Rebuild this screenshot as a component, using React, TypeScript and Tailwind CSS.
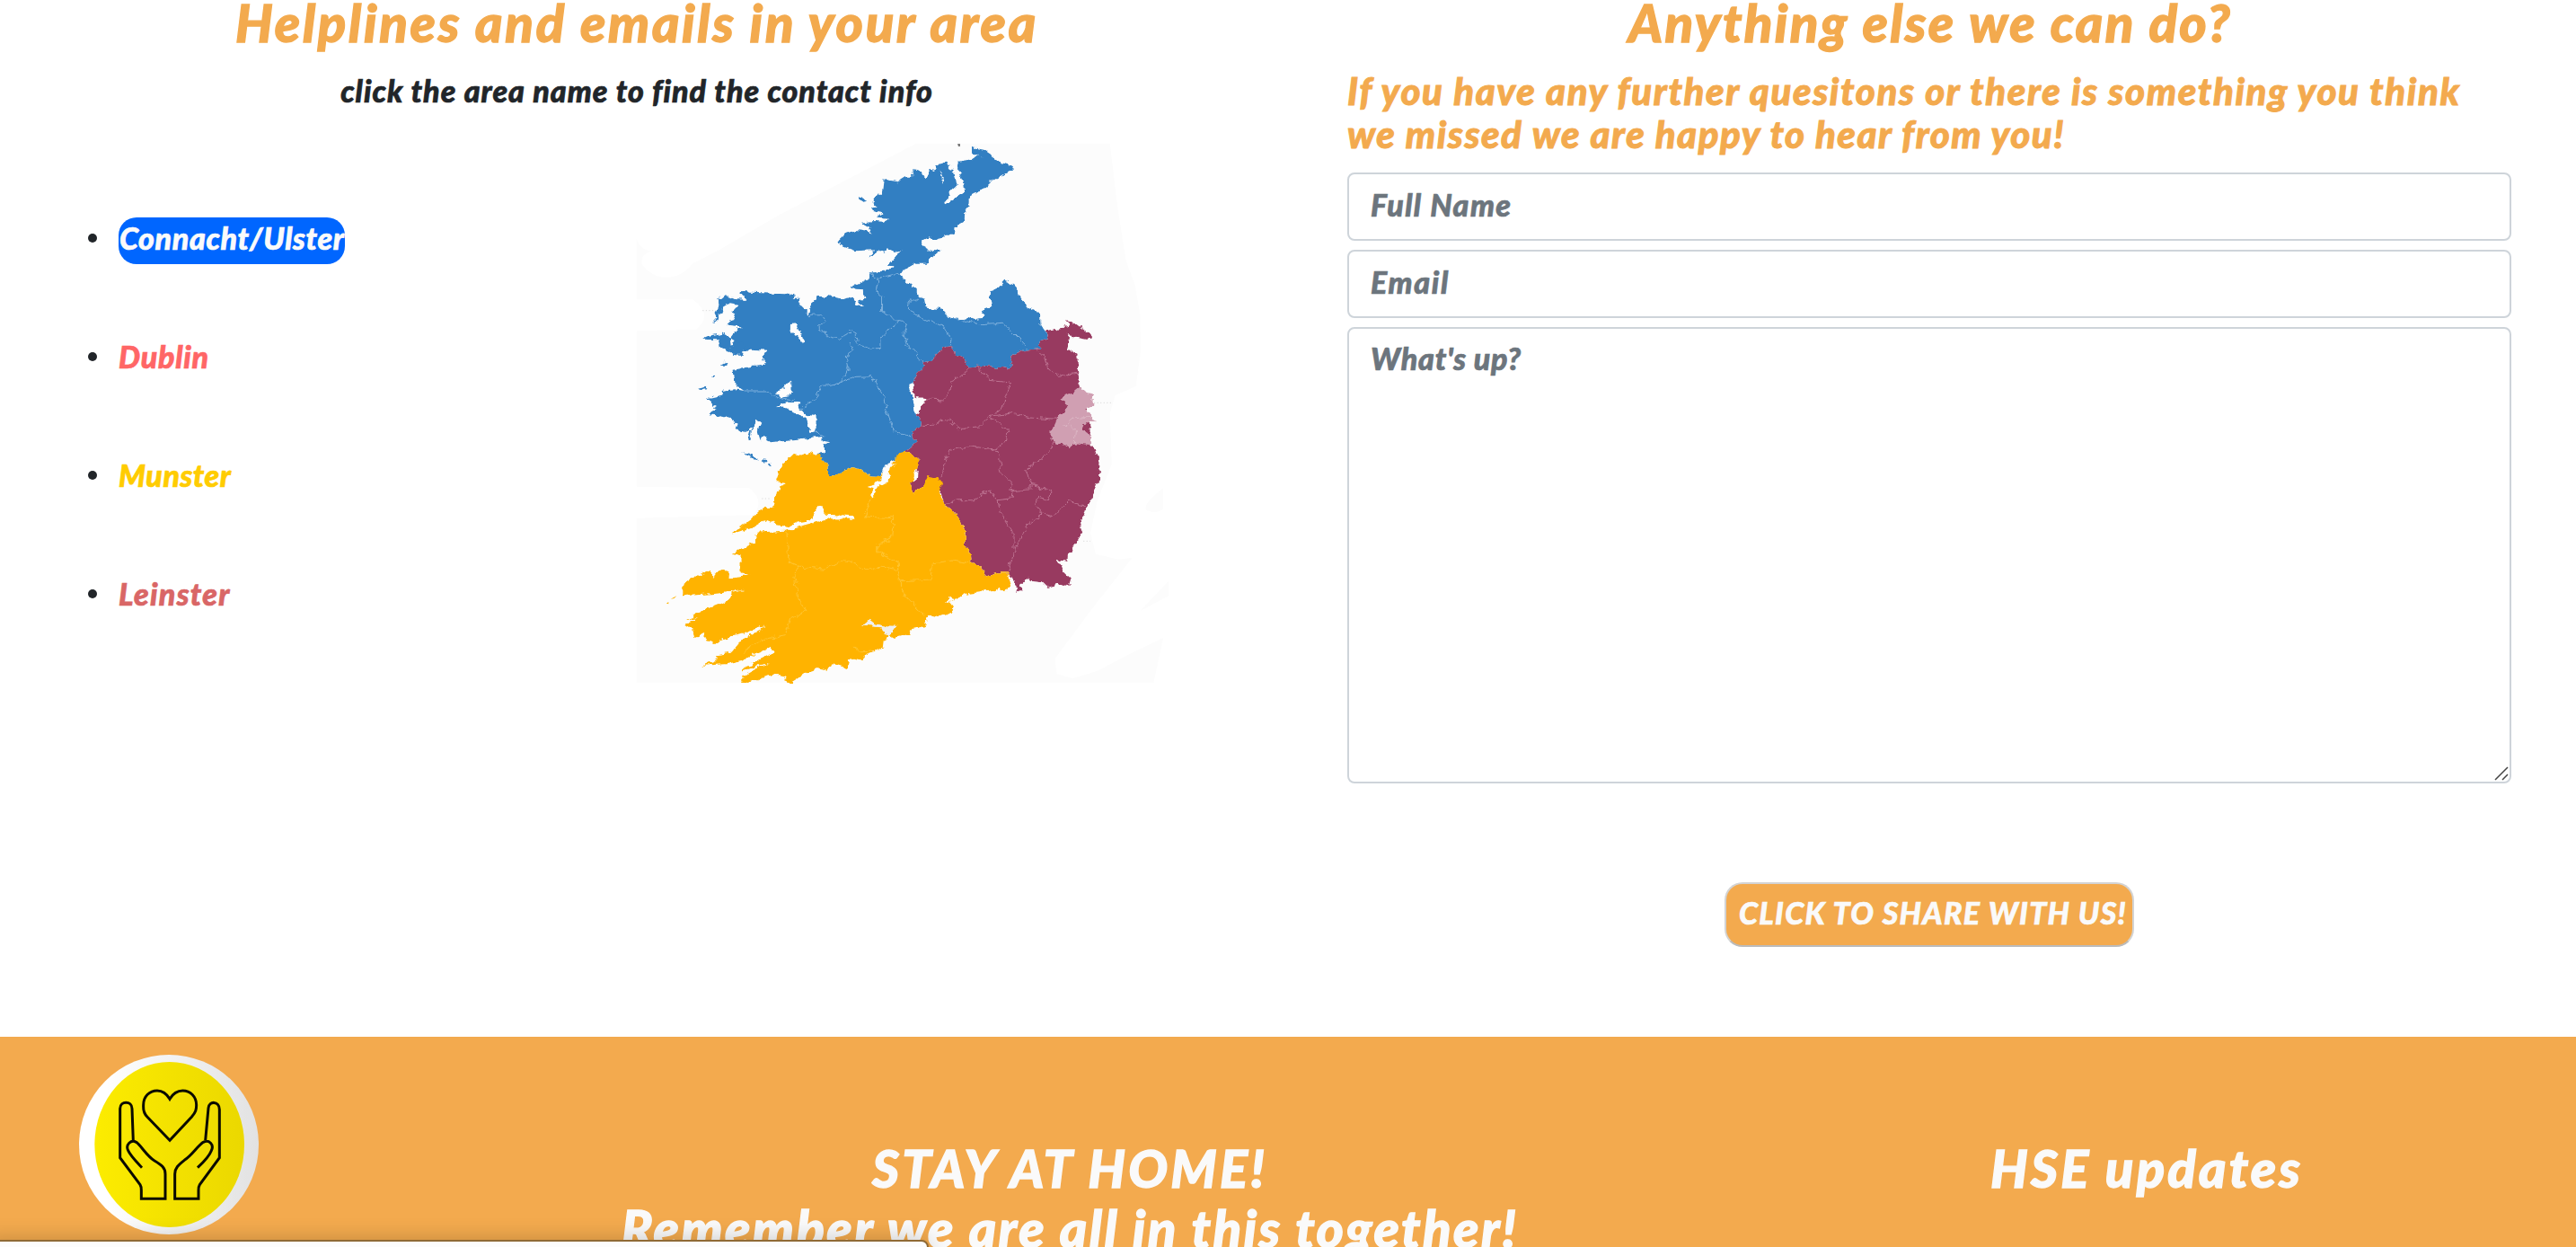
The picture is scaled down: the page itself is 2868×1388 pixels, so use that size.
const BLUE =
  "M965 42L1000 50 1020 66 1025 82 1060 96 1085 106 1080 118 1055 135 1020 155 990 190 965 198 958 210 957 240 947 245 945 290 922 308 920 332 895 332 865 350 845 340 825 352 825 372 845 385 880 390 860 400 840 428 800 428 785 450 760 462 785 495 810 518 815 540 832 545 836 578 880 582 905 612 935 615 955 608 975 618 995 615 1005 578 1025 572 1015 522 1035 515 1058 485 1080 495 1100 520 1105 550 1125 575 1145 588 1158 590 1160 635 1172 655 1183 668 1175 685 1160 690 1158 715 1125 718 1085 735 1078 745 1085 765 1065 780 1015 772 960 778 940 745 918 738 915 715 897 703 870 722 858 755 828 760 832 775 812 800 800 830 800 880 810 925 822 955 820 975 795 992 808 1030 780 1055 755 1085 735 1095 720 1110 708 1140 680 1138 660 1120 630 1110 600 1125 590 1138 565 1138 562 1105 540 1080 530 1065 552 1060 545 1035 565 1027 545 1022 545 1008 470 1020 400 1027 380 1010 368 1022 362 1000 375 965 360 950 350 968 345 1020 338 1018 345 980 325 992 300 982 305 965 290 950 265 942 240 935 225 938 235 925 250 915 235 905 235 892 220 880 265 868 262 855 300 850 325 855 300 835 295 785 340 775 385 770 375 745 388 722 325 718 320 735 295 732 282 722 260 710 255 685 210 683 235 670 262 662 285 675 288 710 300 690 285 680 298 660 315 640 280 635 285 620 300 615 290 590 305 570 280 565 265 575 258 600 243 628 240 605 252 580 250 555 270 535 300 548 330 552 312 525 325 518 345 527 440 532 450 527 467 532 465 545 482 545 475 565 500 580 500 605 515 570 525 540 560 540 600 552 630 545 640 570 660 575 645 555 672 545 655 535 665 520 640 518 625 512 650 495 680 478 680 460 725 458 745 442 733 432 755 405 770 378 745 390 730 382 720 395 705 385 682 410 690 385 640 388 595 368 590 352 610 330 640 318 685 325 680 310 655 293 690 288 715 290 732 278 700 275 715 265 685 258 680 245 705 238 685 215 698 200 715 200 720 150 760 157 780 142 800 138 797 118 820 122 830 140 845 140 840 115 860 120 870 98 895 92 910 120 925 90 965 82 980 70 998 85 970 60Z";
const MAROON =
  "M897 703L915 715 918 738 940 745 960 778 1015 772 1065 780 1085 765 1078 745 1085 735 1125 718 1158 715 1160 690 1175 685 1183 668 1175 655 1235 642 1235 622 1260 632 1300 668 1295 682 1265 675 1228 667 1240 670 1235 715 1263 735 1265 795 1272 840 1290 900 1300 1035 1312 1050 1320 1080 1318 1110 1328 1145 1310 1190 1295 1225 1285 1270 1270 1300 1278 1330 1255 1375 1237 1400 1235 1425 1205 1418 1225 1455 1245 1480 1240 1508 1210 1500 1180 1512 1165 1495 1130 1490 1125 1475 1112 1490 1105 1515 1090 1530 1095 1510 1080 1480 1070 1465 1035 1465 1010 1475 985 1440 963 1425 960 1390 945 1370 945 1310 920 1265 890 1240 880 1200 870 1170 830 1175 805 1198 788 1165 810 1160 818 1085 780 1055 808 1030 795 992 820 975 822 955 810 925 805 870 800 830 812 800 832 775 828 760 858 755 870 722Z";
const DUBLIN =
  "M1270 842L1288 862 1308 870 1305 905 1285 915 1300 930 1300 950 1318 957 1280 967 1277 985 1300 1000 1303 1035 1250 1030 1240 1050 1230 1035 1190 1020 1190 990 1205 950 1235 915 1230 895 1215 880 1250 862Z";
const MUNSTER =
  "M465 1065L500 1072 518 1058 532 1065 540 1080 562 1105 565 1138 590 1138 600 1125 630 1110 660 1120 680 1138 708 1140 755 1085 760 1060 780 1055 818 1085 815 1120 800 1140 805 1165 788 1165 805 1198 830 1175 845 1140 885 1162 875 1195 890 1240 920 1265 945 1310 945 1370 960 1390 963 1425 985 1440 1010 1475 1035 1465 1070 1465 1075 1500 1065 1522 1030 1520 960 1532 930 1545 905 1560 915 1575 910 1595 870 1612 845 1605 835 1640 800 1650 790 1670 750 1682 735 1672 720 1690 718 1710 690 1725 670 1730 658 1755 635 1748 620 1752 612 1780 570 1765 560 1790 530 1782 500 1795 480 1812 455 1830 435 1825 445 1805 420 1800 380 1810 335 1830 318 1825 330 1805 395 1762 318 1793 325 1780 410 1730 400 1712 350 1735 320 1755 270 1768 210 1772 250 1752 245 1738 290 1730 310 1702 345 1670 385 1640 300 1670 240 1698 218 1688 215 1665 185 1680 180 1650 160 1635 195 1615 165 1620 190 1595 280 1555 290 1530 330 1520 250 1532 150 1540 150 1505 185 1475 230 1455 230 1475 265 1450 285 1478 340 1470 315 1465 315 1405 288 1397 355 1365 360 1325 330 1325 290 1330 345 1285 380 1245 405 1245 415 1190 440 1160 415 1155 430 1105Z";

const BLUE_BORDERS =
  "M706 478L698 525 712 540 712 590 760 622 720 665 708 685 708 712 680 714 643 698 640 665 625 658 590 688 545 660 535 640 555 625 540 602 505 605M680 462L706 478 760 462M815 540L792 560 790 588 830 612 860 630 890 645 908 680 906 705M760 622L785 630 775 670 785 712 800 718 828 760M905 612L985 632 1055 628 1080 660 1105 690 1125 715M620 690L632 720 610 740 620 780 605 818 585 832 640 808 680 806 700 840 720 870 725 910 745 990 795 1008M585 832L545 838 520 885 485 918M325 855L388 855 415 875 465 885M525 990L550 1005";
const MAROON_BORDERS =
  "M960 778L940 805 908 825 905 860 890 885 840 882M980 768L1015 820 1075 828 1060 880 1050 920 1015 940 985 975 925 980 905 945 855 970 822 970M1015 940L1065 985 1060 1030 1020 1055M1015 940L1080 930 1130 945 1205 952M1040 1055L960 1040 900 1055 875 1150M1040 1055L1050 1130 1080 1165 1075 1215 1040 1220 1015 1185 975 1220 920 1220 890 1235M1080 1190L1130 1185 1132 1160 1120 1120 1185 1060 1200 1025M1132 1172L1190 1185 1185 1220 1150 1210 1145 1235 1165 1265 1195 1275 1240 1220 1285 1240M1165 1265L1125 1300 1090 1375 1065 1465M1040 1220L1045 1260 1085 1330 1085 1380M1145 715L1170 740 1180 780 1210 805 1265 795";
const MUNSTER_BORDERS =
  "M690 1200L665 1275 745 1280 740 1350 700 1365 700 1390 755 1425 765 1490 855 1485 858 1430 910 1422 963 1430M755 1452L710 1440 675 1458 610 1418 550 1450 480 1440 450 1425 445 1325M480 1440L465 1475 480 1560 500 1588 455 1615 440 1670 380 1685 320 1730M765 1490L765 1520 830 1600M635 1710L650 1725 685 1722";
const WATER =
  "M905 90L930 88 928 120 943 155 946 190 920 207 888 237 900 200 912 182 928 165 920 140ZM876 112L888 150 880 168 882 145ZM455 630L470 628 482 660 498 690 490 700 475 675 455 650ZM458 818L460 870 430 875 412 862 435 850ZM415 905L450 893 480 895 487 925 500 935 525 940 525 995 510 995 500 945 470 930 440 912ZM790 830L800 825 803 875 842 880 822 895 822 930 806 925 800 880 790 850ZM290 1333L345 1312 385 1285 415 1300 450 1308 470 1295 510 1288 530 1240 548 1240 552 1268 635 1273 633 1283 560 1282 480 1312 440 1322 355 1328ZM725 1095L757 1100 735 1115 730 1160 700 1180 685 1212 678 1200 690 1180 670 1172 710 1160 715 1130ZM1040 1510L1050 1522 1025 1522ZM895 1545L915 1552 900 1565Z";
const ISLES =
  "M652 212L660 208 670 222 655 224ZM258 765L272 755 283 762 265 768ZM235 808L245 802 243 810ZM195 848L215 842 222 850 205 852ZM292 698L322 690 326 722 310 734 292 728ZM316 1060L345 1068 370 1085 350 1080ZM373 1085L385 1090 382 1098ZM390 1102L402 1100 400 1108Z";

function IrelandMap() {
  return (
    <svg className="block h-[620px] w-[620px] shrink-0" viewBox="0 0 1568 1860" preserveAspectRatio="none">
      <defs>
        <filter id="coast" x="0" y="0" width="1568" height="1860" filterUnits="userSpaceOnUse" colorInterpolationFilters="sRGB">
          <feTurbulence type="fractalNoise" baseFrequency="0.045" numOctaves="3" seed="4" result="n" />
          <feDisplacementMap in="SourceGraphic" in2="n" scale="22" xChannelSelector="R" yChannelSelector="G" />
        </filter>
      </defs>
      <path
        fill="#fcfcfc"
        d="M808 30H1355L1375 230 1400 420 1425 500 1440 600 1442 720 1428 840 1370 870 1355 930 1360 1100 1320 1220 1300 1330 1315 1400 1380 1418 1418 1412 1300 1590 1200 1750 1205 1800 1250 1815 1320 1790 1400 1740 1505 1680 1478 1830H22V1280L350 1270Q385 1225 340 1180L22 1175V655L190 650Q240 600 180 550L22 550V345Q30 385 65 388 30 400 38 435 70 480 110 476 150 475 180 430L250 388 420 270Z"
      />
      <path fill="#fcfcfc" d="M1505 1180V1250Q1480 1268 1460 1255 1440 1240 1505 1180ZM1520 1490V1540L1440 1590Z" />
      <g filter="url(#coast)" strokeLinejoin="round">
        <path fill="#327fc2" d={BLUE} />
        <path fill="#327fc2" d={ISLES} />
        <path fill="#983a60" d={MAROON} />
        <path fill="#ffb300" d={MUNSTER} />
        <path fill="#d09fb2" d={DUBLIN} />
        <path fill="#fdfdfd" d={WATER} />
        <path fill="#efefef" d="M658 1640L675 1622 710 1638 750 1640 735 1672 720 1668 712 1645Z" />
        <g fill="none" strokeWidth="2.5">
          <path stroke="#86b5df" d={BLUE_BORDERS} />
          <path stroke="#c07896" d={MAROON_BORDERS} />
          <path stroke="#ffc42e" strokeWidth="3" d={MUNSTER_BORDERS} />
          <path stroke="#dcb6c5" d="M1225 970L1250 945 1295 940M1235 965L1258 985 1255 1030" />
        </g>
      </g>
      <path fill="#777" d="M926 30h7v9h-5z" />
      <path stroke="#ccc" strokeWidth="2" strokeDasharray="3 6" d="M1310 895H1360M208 587H245M1280 1357H1300M375 1215H400" />
      <path fill="#ffb300" d="M118 1550L135 1540 128 1548ZM106 1565L112 1560V1567Z" />
    </svg>
  );
}

function Logo() {
  return (
    <svg className="block size-[200px]" viewBox="84 102 600 600">
      <defs>
        <linearGradient id="ring">
          <stop offset="0.15" stopColor="#fff" />
          <stop offset="1" stopColor="#e2e2e2" />
        </linearGradient>
        <linearGradient id="disc">
          <stop offset="0" stopColor="#fcec00" />
          <stop offset="1" stopColor="#ebd800" />
        </linearGradient>
      </defs>
      <circle cx="384" cy="402" r="300" fill="url(#ring)" />
      <ellipse cx="386" cy="402" rx="250" ry="276" fill="url(#disc)" />
      <g fill="none" stroke="#0b0b00" strokeWidth="9">
        <path d="M387 388L312 310C296 293 299 281 299 270C299 240 320 222 345 222C368 222 380 238 387 250C394 238 406 222 430 222C456 222 476 242 476 270C476 285 474 294 460 310Z" />
        <path d="M265 390L261 282C261 255 221 255 221 282V446L288 536Q292 542 292 555V583H372V500C372 480 360 470 336 456C310 440 292 406 275 394C258 384 238 402 248 422C256 440 278 462 294 479" />
        <path d="M506 388L516 280C518 254 553 257 553 285V446L487 536Q483 542 483 555V583H404V500C404 480 416 470 436 454C462 438 480 406 499 394C518 384 536 402 526 422C520 438 498 462 480 479" />
      </g>
    </svg>
  );
}

const AREAS = [
  { name: "Connacht/Ulster", style: "w-[252px] rounded-[20px] bg-[#0066ff] text-[#fafafa] tracking-[0.65px] pl-px" },
  { name: "Dublin", style: "text-[#ff6666] tracking-[0.7px]" },
  { name: "Munster", style: "text-[#ffcc00] tracking-[0.5px]" },
  { name: "Leinster", style: "text-[#d96666] tracking-[1.3px]" },
];

export default function App() {
  return (
    <div className="relative flex h-[1388px] w-[2868px] flex-col overflow-hidden bg-white font-[Lato,sans-serif] font-black text-[#212529] italic [-webkit-text-stroke-width:0.7px]">
      <div className="flex h-[1154px] shrink-0">
        <section className="-mt-[9px] flex w-[1434px] flex-col">
          <h1 className="h-[68px] pr-4 text-center text-[58px] leading-[68px] tracking-[2.7px] whitespace-nowrap text-[#f3aa4e] [-webkit-text-stroke-width:1.3px]">
            Helplines and emails in your area
          </h1>
          <p className="mt-[22px] h-10 pr-4 text-center text-[34px] leading-10 tracking-[1.02px] whitespace-nowrap">
            click the area name to find the contact info
          </p>
          <div className="mt-[29px] flex">
            <ul className="mt-[92px] w-[700px] pl-[98px]">
              {AREAS.map((a) => (
                <li key={a.name} className="flex h-[132px] items-start">
                  <i className="mt-[18px] mr-6 size-2.5 rounded-full bg-[#212529]" />
                  <span className={`block h-[52px] pt-[3px] text-[34px] leading-10 whitespace-nowrap ${a.style}`}>{a.name}</span>
                </li>
              ))}
            </ul>
            <IrelandMap />
          </div>
        </section>
        <section className="-mt-[9px] flex w-[1434px] flex-col pr-[72px] pl-[66px]">
          <h1 className="h-[68px] pl-0.5 text-center text-[58px] leading-[68px] tracking-[2.37px] whitespace-nowrap text-[#f3aa4e] [-webkit-text-stroke-width:1.3px]">
            Anything else we can do?
          </h1>
          <h4 className="mt-[18px] text-[42px] leading-[48px] whitespace-nowrap text-[#f3aa4e] [-webkit-text-stroke-width:0.9px]">
            <span className="tracking-[1.6px]">If you have any further quesitons or there is something you think</span>
            <br />
            <span className="tracking-[1.48px]">we missed we are happy to hear from you!</span>
          </h4>
          <form className="mt-[19px] flex flex-col gap-2.5 text-[34px] leading-10">
            <input
              className="h-[76px] rounded-lg border-2 border-[#ced4da] pr-6 pb-[6px] pl-6 tracking-[1.4px] italic outline-none placeholder:text-[#6c757d]"
              placeholder="Full Name"
            />
            <input
              className="h-[76px] rounded-lg border-2 border-[#ced4da] pr-6 pb-[6px] pl-6 tracking-[1.7px] italic outline-none placeholder:text-[#6c757d]"
              placeholder="Email"
            />
            <div className="relative h-[508px]">
              <textarea
                className="block h-full w-full resize-none rounded-lg border-2 border-[#ced4da] px-6 pt-[13px] tracking-[0.73px] italic outline-none placeholder:text-[#6c757d]"
                placeholder="What's up?"
              />
              <svg className="absolute right-[3px] bottom-[3px] size-4" viewBox="0 0 16 16" stroke="#444" strokeWidth="1.5">
                <path d="M1 15L15 1M9 15L15 9" />
              </svg>
            </div>
          </form>
          <button className="mt-[110px] h-[72px] w-[456px] self-center rounded-[20px] border-2 border-[#d3d3d3] border-b-[#bbb] bg-[#f3aa4e] pb-1 pl-2 text-[34px] leading-10 tracking-[1.27px] whitespace-nowrap text-[#fafafa]">
            CLICK TO SHARE WITH US!
          </button>
        </section>
      </div>
      <footer className="relative flex h-[234px] shrink-0 overflow-hidden bg-[#f3aa4e] text-[58px] leading-[67px] whitespace-nowrap text-[#fafafa] [-webkit-text-stroke-width:1.3px]">
        <div className="w-[470px] pt-5 pl-[88px]">
          <Logo />
        </div>
        <div className="w-[1442px] pt-[112px] text-center">
          <span className="tracking-[3.2px]">STAY AT HOME!</span>
          <br />
          <span className="tracking-[2.43px]">Remember we are all in this together!</span>
        </div>
        <div className="w-[956px] pt-[112px] text-center tracking-[3.15px]">HSE updates</div>
      </footer>
      <div className="absolute -bottom-4 -left-4 h-6 w-[1050px] rounded-tr-lg border-2 border-[#8f6a35] bg-[#fcfcfc] shadow-[0_0_24px_rgba(0,0,0,0.22)]" />
    </div>
  );
}
